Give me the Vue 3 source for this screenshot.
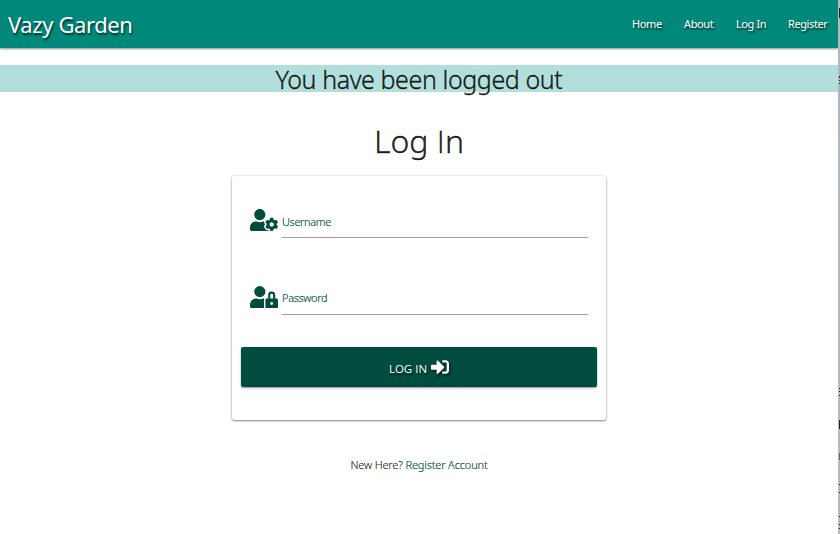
<script setup>
const links = [
  { label: 'Home', cls: 'home' },
  { label: 'About', cls: 'about' },
  { label: 'Log In', cls: 'login' },
  { label: 'Register', cls: 'register' },
]
const fields = [
  {
    label: 'Username',
    cls: 'username',
    icon: 'M610.5 373.3c2.6-14.1 2.6-28.5 0-42.6l25.8-14.9c3-1.7 4.3-5.2 3.3-8.5-6.7-21.6-18.2-41.2-33.2-57.4-2.3-2.5-6-3.1-9-1.4l-25.8 14.9c-10.9-9.3-23.4-16.5-36.9-21.3v-29.8c0-3.4-2.4-6.4-5.7-7.1-22.3-5-45-4.8-66.2 0-3.3.7-5.7 3.7-5.7 7.1v29.8c-13.5 4.8-26 12-36.9 21.3l-25.8-14.9c-2.9-1.7-6.7-1.1-9 1.4-15 16.2-26.5 35.8-33.2 57.4-1 3.3.4 6.8 3.3 8.5l25.8 14.9c-2.6 14.1-2.6 28.5 0 42.6l-25.8 14.9c-3 1.7-4.3 5.2-3.3 8.5 6.7 21.6 18.2 41.1 33.2 57.4 2.3 2.5 6 3.1 9 1.4l25.8-14.9c10.9 9.3 23.4 16.5 36.9 21.3v29.8c0 3.4 2.4 6.4 5.7 7.1 22.3 5 45 4.8 66.2 0 3.3-.7 5.7-3.7 5.7-7.1v-29.8c13.5-4.8 26-12 36.9-21.3l25.8 14.9c2.9 1.7 6.7 1.1 9-1.4 15-16.2 26.5-35.8 33.2-57.4 1-3.3-.4-6.8-3.3-8.5l-25.8-14.9zM496 400.5c-26.8 0-48.5-21.8-48.5-48.5s21.8-48.5 48.5-48.5 48.5 21.8 48.5 48.5-21.7 48.5-48.5 48.5zM224 256c70.7 0 128-57.3 128-128S294.7 0 224 0 96 57.3 96 128s57.3 128 128 128zm201.2 226.5c-2.3-1.2-4.6-2.6-6.8-3.9l-7.9 4.6c-6 3.4-12.8 5.3-19.6 5.3-10.9 0-21.4-4.6-28.9-12.6-18.3-19.8-32.3-43.9-40.2-69.6-5.5-17.7 1.9-36.4 17.9-45.7l7.9-4.6c-.1-2.6-.1-5.2 0-7.8l-7.9-4.6c-16-9.2-23.4-28-17.9-45.7.9-2.9 2.2-5.8 3.2-8.7-3.8-.3-7.5-1.2-11.4-1.2h-16.7c-22.2 10.2-46.9 16-72.9 16s-50.6-5.8-72.9-16h-16.7C60.2 288 0 348.2 0 422.4V464c0 26.5 21.5 48 48 48h352c10.1 0 19.5-3.2 27.2-8.5-1.2-3.8-2-7.7-2-11.8v-9.2z',
  },
  {
    label: 'Password',
    cls: 'password',
    icon: 'M224 256A128 128 0 1 0 96 128a128 128 0 0 0 128 128zm96 64a63.08 63.08 0 0 1 8.1-30.5c-4.8-.5-9.5-1.5-14.5-1.5h-16.7a174.08 174.08 0 0 1-145.8 0h-16.7A134.43 134.43 0 0 0 0 422.4V464a48 48 0 0 0 48 48h280.9a63.54 63.54 0 0 1-8.9-32zm288-32h-32v-80a80 80 0 0 0-160 0v80h-32a32 32 0 0 0-32 32v160a32 32 0 0 0 32 32h224a32 32 0 0 0 32-32V320a32 32 0 0 0-32-32zM496 432a32 32 0 1 1 32-32 32 32 0 0 1-32 32zm32-144h-64v-80a32 32 0 0 1 64 0z',
  },
]
</script>

<template>
  <div class="window">
    <div class="page">
      <nav class="navbar">
        <a class="brand">Vazy Garden</a>
        <div class="links">
          <a v-for="l in links" :key="l.label" :class="l.cls">{{ l.label }}</a>
        </div>
      </nav>
      <h4 class="flash"><span>You have been logged out</span></h4>
      <h3 class="title">Log <span class="plain">I</span>n</h3>
      <form class="card" @submit.prevent>
        <div v-for="f in fields" :key="f.label" class="field" :class="f.cls">
          <svg class="prefix" viewBox="0 0 640 512"><path :d="f.icon" /></svg>
          <label class="input"><span>{{ f.label }}</span></label>
        </div>
        <button class="btn" type="submit">
          <span>LOG IN</span>
          <svg viewBox="0 0 512 512"><path d="M416 448h-84c-6.6 0-12-5.4-12-12v-40c0-6.6 5.4-12 12-12h84c17.7 0 32-14.3 32-32V160c0-17.7-14.3-32-32-32h-84c-6.6 0-12-5.4-12-12V76c0-6.6 5.4-12 12-12h84c53 0 96 43 96 96v192c0 53-43 96-96 96zm-47-201L201 79c-15-15-41-4.5-41 17v96H24c-13.3 0-24 10.7-24 24v96c0 13.3 10.7 24 24 24h136v96c0 21.5 26 32 41 17l168-168c9.3-9.4 9.3-24.6 0-34z" /></svg>
        </button>
      </form>
      <p class="signup"><span>New Here? <a>Register Account</a></span></p>
    </div>
    <svg class="edge" viewBox="0 0 2 534">
      <path d="M1 8h1v10h-1zM1 76h1v2h-1zM1 80h1v1h-1zM1 83h1v1h-1zM1 388h1v1h-1zM1 391h1v1h-1zM1 395h1v1h-1zM1 420h1v9h-1zM1 484h1v1h-1zM1 492h1v1h-1zM1 516h1v1h-1zM1 524h1v1h-1zM1 528h1v1h-1z" />
      <path class="soft" d="M1 453h1v7h-1z" />
    </svg>
  </div>
</template>

<style>
body {
  margin: 0;
  background: #fff;
}
</style>

<style scoped>
.window {
  display: flex;
  height: 534px;
  overflow: hidden;
  font-family: "Noto Sans", "Open Sans", sans-serif;
  color: rgba(0, 0, 0, 0.87);
}
.page {
  width: 838px;
  display: flex;
  flex-direction: column;
  align-items: center;
  overflow: hidden;
}
.edge {
  width: 2px;
  height: 534px;
  fill: #222;
  shape-rendering: crispEdges;
  background: linear-gradient(#b5bbbd 0, #a9b8c6 100px, #b9b9b9 220px, #b9b9b9 100%);
}
.soft { fill: #666; }
.navbar {
  width: 100%;
  height: 48px;
  flex: none;
  box-sizing: border-box;
  padding: 0 11px 0 8px;
  display: flex;
  align-items: center;
  justify-content: space-between;
  background: #00897b;
  color: #fff;
  text-shadow: 1px 2px 2px rgba(0, 0, 0, 0.65);
  box-shadow: 0 1px 2px rgba(0, 0, 0, 0.45);
}
.brand {
  font-size: 22px;
  line-height: 48px;
  letter-spacing: -0.4px;
}
.links {
  display: flex;
  gap: 22px;
  font-size: 11px;
  white-space: nowrap;
  padding-bottom: 1px;
}
.home { width: 30px; }
.about { width: 30px; }
.login { width: 30px; }
.register { width: 39px; }
.links a { letter-spacing: -0.4px; }
h3, h4, p { margin: 0; }
.flash {
  width: 100%;
  height: 27px;
  margin-top: 17px;
  line-height: 29px;
  background: #b2dfdb;
  font-size: 25px;
  font-weight: 300;
  letter-spacing: -0.4px;
  text-align: center;
  -webkit-text-stroke: 0.35px currentColor;
}
.title {
  margin-top: 29px;
  height: 41px;
  line-height: 40px;
  font-size: 32px;
  font-weight: 300;
  -webkit-text-stroke: 0.35px currentColor;
}
.plain { font-family: "Open Sans", sans-serif; }
.card {
  width: 374px;
  height: 244px;
  margin-top: 14px;
  box-sizing: border-box;
  padding: 33px 9px 0;
  border-radius: 2px;
  background: #fff;
  box-shadow: 0 1px 2px rgba(0, 0, 0, 0.45), 0 0 3px rgba(0, 0, 0, 0.15);
}
.field {
  display: flex;
  gap: 4px;
  height: 77px;
  padding: 0 9px;
}
.prefix {
  width: 28px;
  height: 22.4px;
  fill: #004d40;
}
.input {
  flex: 1;
  height: 28px;
  border-bottom: 1px solid #9e9e9e;
  font-size: 11px;
  font-weight: 300;
  -webkit-text-stroke: 0.15px currentColor;
  line-height: 26px;
  color: #004d40;
}
.input span { letter-spacing: -0.35px; }
.password .input { line-height: 24px; }
.password { height: 61px; }
.btn {
  width: 356px;
  height: 40px;
  border: 0;
  border-radius: 2px;
  display: flex;
  align-items: center;
  justify-content: center;
  gap: 4px;
  padding: 0;
  background: #004d40;
  color: #fff;
  font: 11.5px "Open Sans", "Noto Sans", sans-serif;
  text-shadow: 1px 2px 2px rgba(0, 0, 0, 0.6);
  box-shadow: 0 1px 2px rgba(0, 0, 0, 0.45);
}
.btn span { padding-top: 3px; }
.btn svg {
  width: 18px;
  height: 18px;
  fill: #fff;
  filter: drop-shadow(1px 2px 1px rgba(0, 0, 0, 0.6));
}
.signup {
  margin-top: 37px;
  font-size: 11px;
  font-weight: 300;
  -webkit-text-stroke: 0.15px currentColor;
  line-height: 16px;
  letter-spacing: -0.15px;
}
.signup a { color: #004d40; }
</style>
